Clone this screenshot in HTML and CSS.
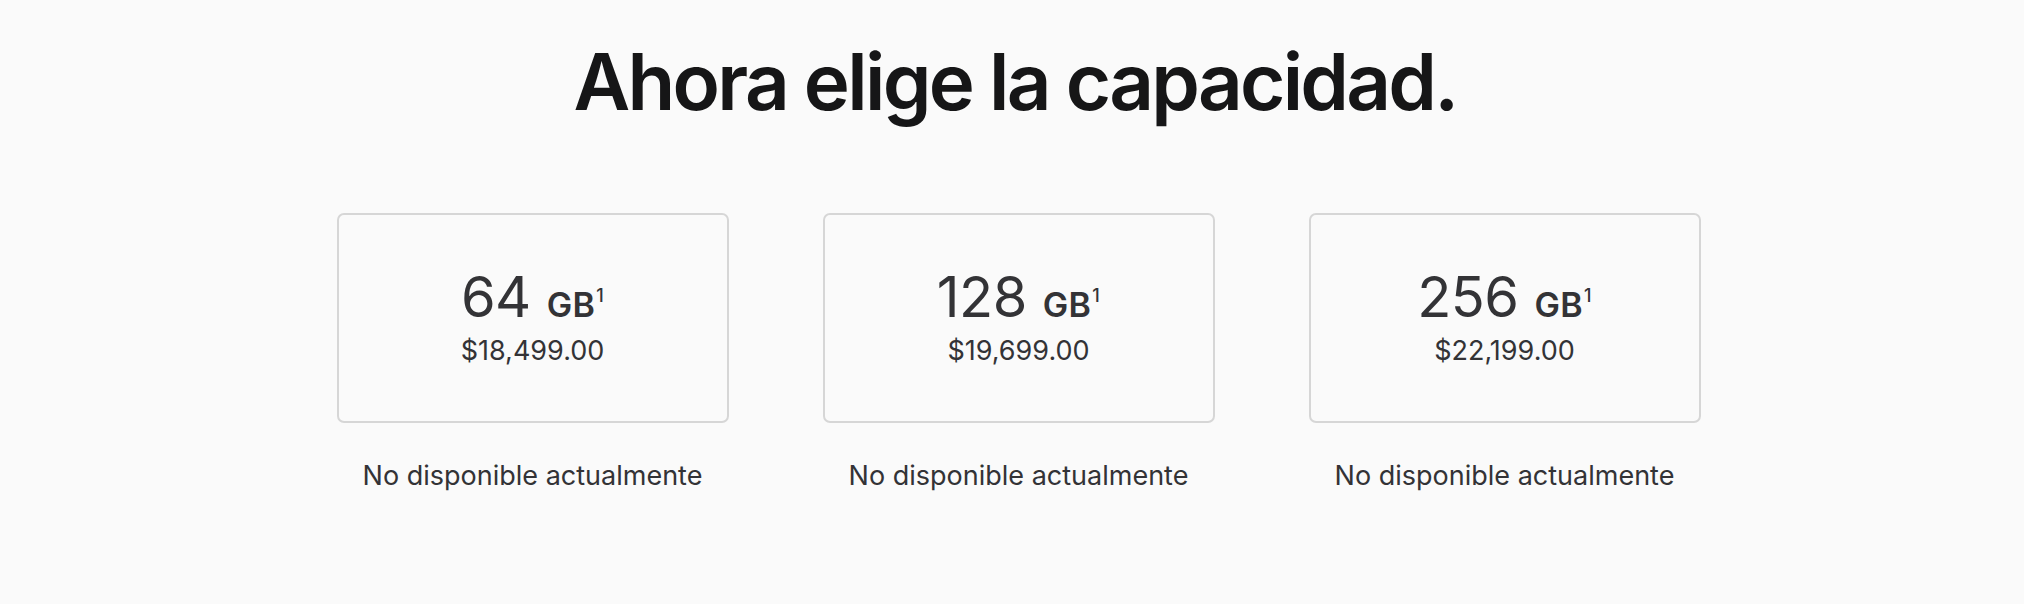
FILE: index.html
```html
<!DOCTYPE html>
<html lang="es">
<head>
<meta charset="utf-8">
<title>Ahora elige la capacidad.</title>
<link rel="stylesheet" href="styles.css">
</head>
<body>
<main class="page">
  <h1 class="headline">Ahora elige la capacidad.</h1>
  <div class="options">
    <div class="option">
      <div class="card">
        <div class="capacity"><span class="num">64</span><span class="unit">GB<sup class="fn">1</sup></span></div>
        <div class="price">$18,499.00</div>
      </div>
      <p class="status">No disponible actualmente</p>
    </div>
    <div class="option">
      <div class="card">
        <div class="capacity"><span class="num">128</span><span class="unit">GB<sup class="fn">1</sup></span></div>
        <div class="price">$19,699.00</div>
      </div>
      <p class="status">No disponible actualmente</p>
    </div>
    <div class="option">
      <div class="card">
        <div class="capacity"><span class="num">256</span><span class="unit">GB<sup class="fn">1</sup></span></div>
        <div class="price">$22,199.00</div>
      </div>
      <p class="status">No disponible actualmente</p>
    </div>
  </div>
</main>
</body>
</html>
```

FILE: styles.css
```css
html, body {
  margin: 0;
  padding: 0;
  background: #fafafa;
}

body {
  font-family: Inter, "Noto Sans", "Liberation Sans", sans-serif;
  color: #333336;
  height: 604px;
  overflow: hidden;
}

.page {
  display: flex;
  flex-direction: column;
  align-items: center;
  padding-top: 41px;
}

.headline {
  margin: 0;
  font-size: 78px;
  line-height: 82px;
  font-weight: 600;
  letter-spacing: -0.035em;
  color: #161617;
  text-align: center;
  padding-left: 6px;
}

.options {
  margin-top: 90px;
  display: grid;
  grid-template-columns: repeat(3, 392px);
  column-gap: 94px;
  justify-content: center;
  padding-left: 13px;
}

.option {
  display: flex;
  flex-direction: column;
  align-items: center;
}

.card {
  box-sizing: border-box;
  width: 392px;
  height: 210px;
  border: 2px solid #d6d6d6;
  border-radius: 7px;
  display: flex;
  flex-direction: column;
  align-items: center;
  justify-content: center;
}

.capacity {
  font-size: 56px;
  line-height: 56px;
  white-space: nowrap;
}

.num {
  font-weight: 400;
  letter-spacing: -0.01em;
  margin-right: 16px;
}

.unit {
  font-size: 34px;
  font-weight: 600;
  letter-spacing: 0.01em;
}

.fn {
  font-size: 18px;
  font-weight: 500;
  vertical-align: 15px;
  line-height: 0;
  margin-left: 1px;
}

.price {
  font-size: 27px;
  line-height: 34px;
  margin-top: 1px;
}

.status {
  margin: 36px 0 0;
  font-size: 27px;
  line-height: 34px;
}
```
